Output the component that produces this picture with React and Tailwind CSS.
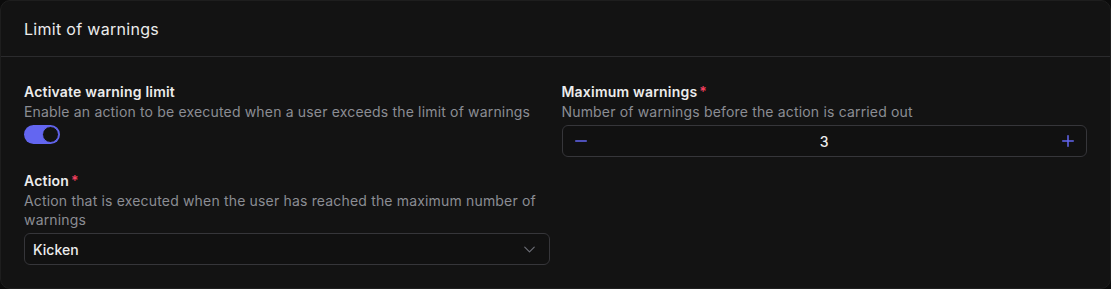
import { ChevronDown, Minus, Plus } from "lucide-react";

function Field({ label, required, desc, children }) {
  return (
    <div className="flex flex-col">
      <label className="text-[14px] font-semibold leading-5 tracking-[0.2px] text-[#ececec]">
        {label}
        {required && <span className="ml-0.5 text-[#f43f5e]">*</span>}
      </label>
      <p className="text-[14px] leading-[19px] tracking-[0.17px] text-[#8b8d93]">{desc}</p>
      <div className="mt-1">{children}</div>
    </div>
  );
}

export default function App() {
  return (
    <div className="h-[289px] w-[1111px] bg-[#0b0b0b] font-['Inter',sans-serif]">
      <div className="h-full overflow-hidden rounded-[10px] border border-[#1e1e1e] bg-[#131313]">
        <div className="flex h-[56px] items-center border-b border-[#2b2b2d] px-[23px]">
          <h2 className="text-[16px] font-normal tracking-[0.3px] text-[#ececec]">Limit of warnings</h2>
        </div>
        <div className="grid grid-cols-2 gap-x-3 px-[23px] pt-[25px]">
          <div className="flex flex-col gap-[27px]">
            <Field
              label="Activate warning limit"
              desc="Enable an action to be executed when a user exceeds the limit of warnings"
            >
              {/* switch */}
              <div className="flex h-[19px] w-[36px] items-center justify-end rounded-full bg-[#6366f1] px-[1px]">
                <span className="h-[17px] w-[17px] rounded-full border-[1.5px] border-[#6366f1] bg-[#131313]" />
              </div>
            </Field>
            <Field
              label="Action"
              required
              desc="Action that is executed when the user has reached the maximum number of warnings"
            >
              <button className="flex h-[32px] w-full items-center justify-between rounded-md border border-[#36363a] bg-[#111111] pl-[8px] pr-[10px] text-[14px] font-medium text-[#ececec]">
                <span>Kicken</span>
                <ChevronDown size={19} strokeWidth={1.5} className="text-[#6b6d75]" />
              </button>
            </Field>
          </div>
          <div>
            <Field
              label="Maximum warnings"
              required
              desc="Number of warnings before the action is carried out"
            >
              <div className="flex h-[32px] w-full items-center justify-between rounded-md border border-[#36363a] bg-[#111111] px-[9px]">
                <Minus size={18} strokeWidth={2} className="text-[#6366f1]" />
                <span className="text-[14px] font-medium text-[#ececec]">3</span>
                <Plus size={18} strokeWidth={2} className="text-[#6366f1]" />
              </div>
            </Field>
          </div>
        </div>
      </div>
    </div>
  );
}
